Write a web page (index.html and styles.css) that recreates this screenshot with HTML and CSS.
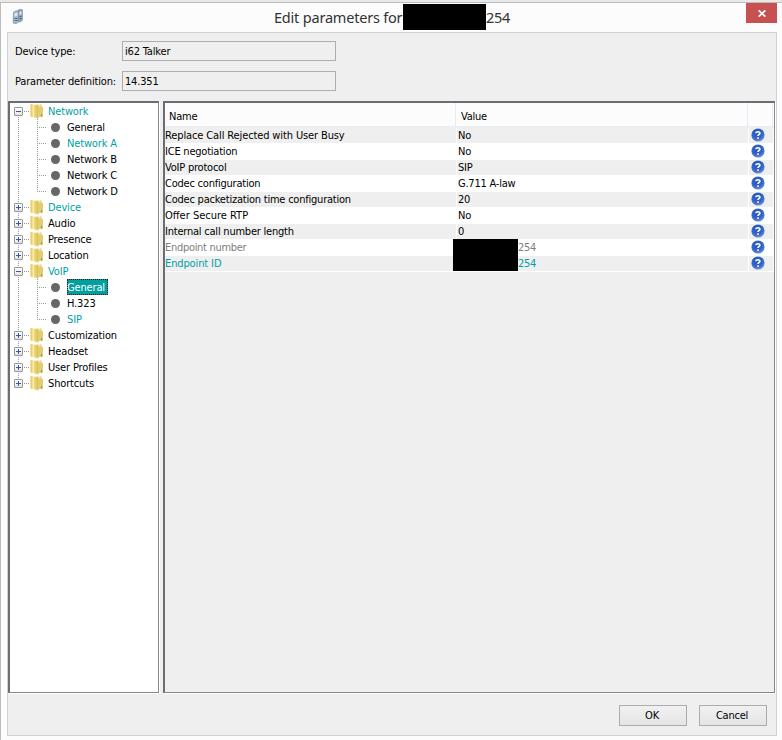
FILE: index.html
```html
<!DOCTYPE html>
<html lang="en">
<head>
<meta charset="utf-8">
<title>Edit parameters</title>
<link rel="stylesheet" href="styles.css">
</head>
<body>
<svg class="defs" width="0" height="0" aria-hidden="true">
  <defs>
    <linearGradient id="gold" x1="0" x2="1"><stop offset="0" stop-color="#dcbf50"/><stop offset=".4" stop-color="#fff3a8"/><stop offset="1" stop-color="#d3b23f"/></linearGradient>
    <linearGradient id="gold2" x1="0" x2="1"><stop offset="0" stop-color="#d9bd55"/><stop offset=".5" stop-color="#fbeeb0"/><stop offset="1" stop-color="#dcc05a"/></linearGradient>
    <radialGradient id="blue" cx=".45" cy=".35" r=".65"><stop offset="0" stop-color="#2453b8"/><stop offset=".65" stop-color="#3465c8"/><stop offset="1" stop-color="#6c92dc"/></radialGradient>
    <symbol id="folder" viewBox="0 0 14 16">
      <path d="M6 1.500H11.500V13.500H6z" fill="url(#gold2)"/>
      <path d="M9 4h4v10H9z" fill="#e6cd6c"/>
      <path d="M.5 1L5 1.500 8.500 3V15.500L5 14.500.5 13.500z" fill="url(#gold)"/>
      <path d="M5 2v12.500" stroke="#cdb14e" stroke-width=".6"/>
      <path d="M11.500 11v2.500" stroke="#66a9a0"/>
    </symbol>
    <symbol id="help" viewBox="0 0 14 14">
      <circle cx="7" cy="7" r="6.600" fill="url(#blue)"/>
      <path d="M5.100 5.200C5.100 3.200 8.900 3.200 8.900 5.200C8.900 6.500 7 6.500 7 8.100M7 9.300v1.600" fill="none" stroke="#fff" stroke-width="1.600"/>
    </symbol>
  </defs>
</svg>
<div class="window">
  <header class="titlebar">
    <svg class="app-icon" viewBox="0 0 12 17"><path d="M5.500 2.500Q8 .5 10.500 1.800V12Q9.500 14.500 6 14z" fill="#8fa3b5" stroke="#8496a6" stroke-width=".7"/><path d="M1.500 4.500Q3.500 2 6.300 3.300V14Q5 16.500 1.200 15z" fill="#a9bccb" stroke="#7b90a2" stroke-width=".8"/><path d="M2.500 5.500l3-1v3l-3 1zM7.500 4l2-.7v3l-2 .7z" fill="#dfeaf2"/><path d="M2.500 10.500h3M2.500 12.500h3M7.500 8.500h2M7.500 10.500h2" stroke="#4d6a84"/></svg>
    <h1 class="title"><span class="t-title">Edit parameters for</span><i class="redact redact-title"></i><span class="t-num">254</span></h1>
    <button class="close" aria-label="Close"><svg viewBox="0 0 8 7"><path d="M.7.3l6.600 6.400M7.300.3L.7 6.700" stroke="#fff" stroke-width="1.700"/></svg></button>
  </header>
  <main class="panel">
    <div class="field"><label>Device type:</label><div class="input">i62 Talker</div></div>
    <div class="field"><label>Parameter definition:</label><div class="input">14.351</div></div>
    <div class="split">
      <div class="tree">
        <div class="node first"><i class="box"></i><svg class="folder"><use href="#folder"/></svg><span class="changed">Network</span></div>
        <div class="leaf"><i class="dot"></i><span>General</span></div>
        <div class="leaf"><i class="dot"></i><span class="changed">Network A</span></div>
        <div class="leaf"><i class="dot"></i><span>Network B</span></div>
        <div class="leaf"><i class="dot"></i><span>Network C</span></div>
        <div class="leaf end"><i class="dot"></i><span>Network D</span></div>
        <div class="node"><i class="box plus"></i><svg class="folder"><use href="#folder"/></svg><span class="changed">Device</span></div>
        <div class="node"><i class="box plus"></i><svg class="folder"><use href="#folder"/></svg><span>Audio</span></div>
        <div class="node"><i class="box plus"></i><svg class="folder"><use href="#folder"/></svg><span>Presence</span></div>
        <div class="node"><i class="box plus"></i><svg class="folder"><use href="#folder"/></svg><span>Location</span></div>
        <div class="node"><i class="box"></i><svg class="folder"><use href="#folder"/></svg><span class="changed">VoIP</span></div>
        <div class="leaf"><i class="dot"></i><span class="selected">General</span></div>
        <div class="leaf"><i class="dot"></i><span>H.323</span></div>
        <div class="leaf end"><i class="dot"></i><span class="changed">SIP</span></div>
        <div class="node"><i class="box plus"></i><svg class="folder"><use href="#folder"/></svg><span>Customization</span></div>
        <div class="node"><i class="box plus"></i><svg class="folder"><use href="#folder"/></svg><span>Headset</span></div>
        <div class="node"><i class="box plus"></i><svg class="folder"><use href="#folder"/></svg><span>User Profiles</span></div>
        <div class="node last"><i class="box plus"></i><svg class="folder"><use href="#folder"/></svg><span>Shortcuts</span></div>
      </div>
      <div class="table">
        <div class="head"><div>Name</div><div>Value</div><div></div></div>
        <div class="row"><div class="loose">Replace Call Rejected with User Busy</div><div>No</div><div><svg><use href="#help"/></svg></div></div>
        <div class="row"><div>ICE negotiation</div><div>No</div><div><svg><use href="#help"/></svg></div></div>
        <div class="row"><div>VoIP protocol</div><div>SIP</div><div><svg><use href="#help"/></svg></div></div>
        <div class="row"><div>Codec configuration</div><div>G.711 A-law</div><div><svg><use href="#help"/></svg></div></div>
        <div class="row"><div>Codec packetization time configuration</div><div>20</div><div><svg><use href="#help"/></svg></div></div>
        <div class="row"><div class="looser">Offer Secure RTP</div><div>No</div><div><svg><use href="#help"/></svg></div></div>
        <div class="row"><div>Internal call number length</div><div>0</div><div><svg><use href="#help"/></svg></div></div>
        <div class="row muted"><div class="tight">Endpoint number</div><div class="tight"><i class="redact"></i>254</div><div><svg><use href="#help"/></svg></div></div>
        <div class="row changed"><div class="loose">Endpoint ID</div><div class="tight"><i class="redact"></i>254</div><div><svg><use href="#help"/></svg></div></div>
      </div>
    </div>
    <footer class="actions"><button class="btn">OK</button><button class="btn">Cancel</button></footer>
  </main>
</div>
</body>
</html>
```
FILE: styles.css
```css
* { box-sizing: border-box; }
body { margin: 0; background: #e9e9e9; font: 11px/16px "DejaVu Sans Condensed", "DejaVu Sans", sans-serif; letter-spacing: -0.22px; color: #000; overflow: hidden; }
.defs { position: absolute; }
.window { height: 738px; margin-top: 2px; border-top: 1px solid #bcbcbc; border-left: 1px solid #bcbcbc; background: #fcfcfc; padding: 0 5px 4px 6px; display: flex; flex-direction: column; }
.titlebar { height: 29px; display: flex; align-items: flex-start; }
.app-icon { width: 12px; height: 17px; margin: 5px 0 0 5px; }
.title { margin: 1px 0 0 250px; font: 14.5px/27px "Noto Sans", sans-serif; letter-spacing: -0.2px; color: #333; display: flex; width: 472px; white-space: nowrap; }
.t-title { width: 129px; }
.t-num { letter-spacing: -0.35px; }
.redact { background: #000; display: inline-block; }
.redact-title { width: 83px; height: 26px; }
.close { width: 31px; height: 20px; border: 0; padding: 0; background: #c75050; display: flex; align-items: center; justify-content: center; }
.close svg { width: 8px; height: 7px; margin-top: 1px; }
.panel { flex: 1; background: #efefef; border: 1px solid #d2d2d2; padding-top: 8px; }
.field { display: flex; height: 20px; margin-bottom: 10px; line-height: 20px; letter-spacing: -0.17px; }
.field label { width: 114px; padding-left: 7px; white-space: nowrap; line-height: 22px; }
.input { width: 214px; border: 1px solid #abadb3; padding-left: 2px; }
.split { display: flex; gap: 4px; height: 592px; }
.tree, .table { border: 1px solid #828790; border-width: 2px 1px 1px 2px; border-top-color: #696e74; border-left-color: #696e74; box-shadow: 1px 1px #fff; }
.tree { width: 151px; background: #fff; letter-spacing: -0.15px; }
.table { width: 612px; }
.node, .leaf { height: 16px; display: flex; align-items: center; white-space: nowrap; }
.node, .leaf { background: repeating-linear-gradient(#999 0 1px, transparent 1px 2px) 8px 0 / 1px 100% no-repeat; }
.node.first { background-position: 8px 8px; }
.node.last { background-size: 1px 8px; }
.node { padding-left: 4px; }
.box { width: 9px; height: 9px; border: 1px solid #969696; border-radius: 1px; background: linear-gradient(#3c58a0, #3c58a0) center / 5px 1px no-repeat, linear-gradient(#fff, #e4e4e4); }
.box.plus { background: linear-gradient(#3c58a0, #3c58a0) center / 5px 1px no-repeat, linear-gradient(#3c58a0, #3c58a0) center / 1px 5px no-repeat, linear-gradient(#fff, #e4e4e4); }
.node .box::after { content: ""; display: block; width: 6px; height: 1px; margin: 3px 0 0 9px; background: repeating-linear-gradient(90deg, #999 0 1px, transparent 1px 2px); }
.folder { width: 14px; height: 16px; margin: 0 4px 0 7px; }
.leaf { padding-left: 27px; }
.leaf::before { content: ""; width: 10px; height: 16px; margin-right: 4px; background: repeating-linear-gradient(#999 0 1px, transparent 1px 2px) 0 0 / 1px 100% no-repeat, repeating-linear-gradient(90deg, #999 0 1px, transparent 1px 2px) 0 8px / 10px 1px no-repeat; }
.leaf.end::before { background-size: 1px 8px, 10px 1px; }
.dot { width: 9px; height: 9px; border-radius: 50%; background: #666; margin-right: 7px; }
.tree span { height: 16px; line-height: 17px; }
.selected { background: #00a0a0; color: #fff; outline: 1px dotted #401818; outline-offset: -1px; width: 41px; }
.changed { color: #00a0a8; }
.muted { color: #808080; }
.loose { letter-spacing: -0.12px; }
.looser { letter-spacing: 0; }
.tight { letter-spacing: -0.3px; }
.head, .row { display: grid; grid-template-columns: 291px 1fr 25px; white-space: nowrap; }
.head { height: 24px; line-height: 27px; background: #fcfcfc; border-bottom: 1px solid #e8eef6; margin-bottom: 1px; padding-right: 1px; }
.head > div { border-right: 1px solid #e6ecf4; padding-left: 4px; }
.head > div + div { padding-left: 5px; }
.row { height: 16px; border-bottom: 1px solid #fff; line-height: 15px; padding-right: 1px; background: #fff; }
.row:nth-child(even) > div { background: #efefef; }
.row > div + div { margin-left: 1px; padding-left: 1px; position: relative; }
.row svg { display: block; width: 14px; height: 14px; margin-left: 1px; }
.row .redact { position: relative; width: 65px; height: 16px; margin: -1px 0 -1px -5px; vertical-align: top; }
.actions { display: flex; justify-content: flex-end; gap: 12px; padding: 12px 9px 0 0; }
.btn { width: 68px; height: 21px; border: 1px solid #acacac; background: linear-gradient(#f1f1f1, #e5e5e5); font: inherit; letter-spacing: inherit; padding: 0 2px 0 0; line-height: 19px; }
```
